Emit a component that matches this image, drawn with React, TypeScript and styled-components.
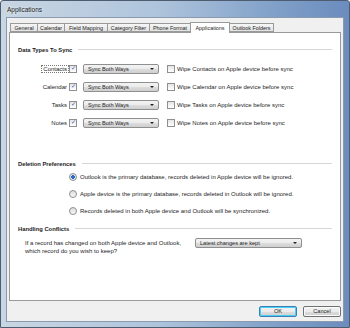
import styled, { createGlobalStyle } from "styled-components";

const GlobalStyle = createGlobalStyle`
  html, body {
    margin: 0;
    padding: 0;
    width: 350px;
    height: 328px;
    overflow: hidden;
  }
  body {
    font-family: "Liberation Sans", Arial, sans-serif;
    font-size: 6px;
    color: #1e1e1e;
  }
`;

const tabs = [
  { name: "General", width: 28 },
  { name: "Calendar", width: 28 },
  { name: "Field Mapping", width: 44 },
  { name: "Category Filter", width: 43 },
  { name: "Phone Format", width: 42 },
  { name: "Applications", width: 40 },
  { name: "Outlook Folders", width: 45 },
];

const syncRows = ["Contacts", "Calendar", "Tasks", "Notes"];

const deletionOptions = [
  "Outlook is the primary database, records deleted in Apple device will be ignored.",
  "Apple device is the primary database, records deleted in Outlook will be ignored.",
  "Records deleted in both Apple device and Outlook will be synchronized.",
];

function App() {
  return (
    <>
      <GlobalStyle />
      <Window>
        <TitleBar>Applications</TitleBar>
        <Client>
          <TabStrip>
            {tabs.map((t) => (
              <Tab key={t.name} $w={t.width} $active={t.name === "Applications"}>
                {t.name}
              </Tab>
            ))}
          </TabStrip>
          <Panel>
            <SectionHeader>
              <span>Data Types To Sync</span>
              <Rule />
            </SectionHeader>
            <SyncGrid>
              {syncRows.map((r) => (
                <SyncRow key={r}>
                  <LabelCell>
                    <RowLabel $focused={r === "Contacts"}>{r}</RowLabel>
                  </LabelCell>
                  <Check $checked />
                  <Select $width={76} $ml={6} $mr={8}>
                    <span>Sync Both Ways</span>
                    <Arrow />
                  </Select>
                  <Check />
                  <WipeText>Wipe {r} on Apple device before sync</WipeText>
                </SyncRow>
              ))}
            </SyncGrid>

            <SectionHeader $top={28}>
              <span>Deletion Preferences</span>
              <Rule />
            </SectionHeader>
            <RadioList>
              {deletionOptions.map((o, i) => (
                <RadioRow key={o}>
                  <Radio $checked={i === 0} />
                  <span>{o}</span>
                </RadioRow>
              ))}
            </RadioList>

            <SectionHeader $top={6}>
              <span>Handling Conflicts</span>
              <Rule />
            </SectionHeader>
            <ConflictRow>
              <ConflictText>
                If a record has changed on both Apple device and Outlook,
                <br />
                which record do you wish to keep?
              </ConflictText>
              <Select $width={107} $ml={0} $mr={0}>
                <span>Latest changes are kept</span>
                <Arrow />
              </Select>
            </ConflictRow>
          </Panel>
          <ButtonBar>
            <Button $focused>OK</Button>
            <Button>Cancel</Button>
          </ButtonBar>
        </Client>
      </Window>
    </>
  );
}

export default App;

const Window = styled.div`
  width: 350px;
  height: 328px;
  box-sizing: border-box;
  display: flex;
  flex-direction: column;
  padding: 0 5px 5px 5px;
  background: linear-gradient(90deg, #c9d6e3 0%, #aec4dc 45%, #7f9fc8 80%, #6b8cbd 100%);
  border: 1px solid #4d5d6f;
  border-radius: 3px 3px 0 0;
`;

const TitleBar = styled.div`
  height: 16px;
  display: flex;
  align-items: center;
  padding-left: 1px;
  font-size: 6.5px;
  color: #1a1a1a;
  text-shadow: 0 0 3px #ffffff;
`;

const Client = styled.div`
  flex: 1;
  display: flex;
  flex-direction: column;
  background: #f0f0f0;
  border: 1px solid #8a9bb0;
  padding: 4px 2px 0 2px;
`;

const TabStrip = styled.div`
  display: flex;
  align-items: flex-end;
  padding-left: 1px;
  height: 10px;
  position: relative;
  z-index: 1;
`;

const Tab = styled.div<{ $active?: boolean; $w: number }>`
  width: ${(p) => p.$w}px;
  box-sizing: border-box;
  height: ${(p) => (p.$active ? "11px" : "9px")};
  margin-bottom: ${(p) => (p.$active ? "-1px" : "0")};
  margin-left: -1px;
  display: flex;
  align-items: center;
  justify-content: center;
  white-space: nowrap;
  font-size: 5.4px;
  border: 1px solid #9a9a9a;
  border-bottom: ${(p) => (p.$active ? "none" : "1px solid #9a9a9a")};
  background: ${(p) =>
    p.$active ? "#ffffff" : "linear-gradient(#f6f6f6, #e3e3e3)"};
  position: relative;
  z-index: ${(p) => (p.$active ? 2 : 1)};
  &:first-child {
    margin-left: 0;
  }
`;

const Panel = styled.div`
  flex: 1;
  background: #ffffff;
  border: 1px solid #9a9a9a;
  padding: 0 8px 0 8px;
`;

const SectionHeader = styled.div<{ $top?: number }>`
  display: flex;
  align-items: center;
  gap: 6px;
  margin-top: ${(p) => p.$top ?? 13}px;
  height: 8px;
  font-weight: bold;
  font-size: 5.8px;
  color: #222;
`;

const Rule = styled.div`
  flex: 1;
  height: 1px;
  background: #d6d6d6;
  border-bottom: 1px solid #ffffff;
`;

const SyncGrid = styled.div`
  display: flex;
  flex-direction: column;
  margin-top: 6px;
`;

const SyncRow = styled.div`
  display: flex;
  align-items: center;
  height: 18px;
`;

const LabelCell = styled.div`
  width: 50px;
  display: flex;
  justify-content: flex-end;
  margin-right: 1px;
`;

const RowLabel = styled.span<{ $focused?: boolean }>`
  padding: 0 1px;
  outline: ${(p) => (p.$focused ? "1px dotted #777" : "none")};
`;

const Check = styled.span<{ $checked?: boolean }>`
  width: 6px;
  height: 6px;
  border: 1px solid #8f8f8f;
  background: linear-gradient(#e4e4e4, #ffffff);
  position: relative;
  flex-shrink: 0;
  &::after {
    content: "${(p) => (p.$checked ? "✓" : "")}";
    position: absolute;
    left: 0.5px;
    top: -2px;
    font-size: 6px;
    color: #3a55b4;
  }
`;

const Select = styled.div<{ $width: number; $ml: number; $mr: number }>`
  width: ${(p) => p.$width}px;
  height: 10px;
  box-sizing: border-box;
  margin: 0 ${(p) => p.$mr}px 0 ${(p) => p.$ml}px;
  padding: 0 4px;
  display: flex;
  align-items: center;
  justify-content: space-between;
  flex-shrink: 0;
  border: 1px solid #8e8f8f;
  border-radius: 2px;
  background: linear-gradient(#f3f3f3 0%, #ebebeb 50%, #dddddd 51%, #cfcfcf 100%);
  font-size: 5.6px;
`;

const Arrow = styled.span`
  width: 0;
  height: 0;
  border-left: 2px solid transparent;
  border-right: 2px solid transparent;
  border-top: 2px solid #222;
`;

const WipeText = styled.span`
  margin-left: 2px;
`;

const RadioList = styled.div`
  display: flex;
  flex-direction: column;
  margin-top: 0;
  padding-left: 51px;
`;

const RadioRow = styled.div`
  display: flex;
  align-items: center;
  gap: 3px;
  height: 17px;
`;

const Radio = styled.span<{ $checked?: boolean }>`
  width: 6px;
  height: 6px;
  border-radius: 50%;
  border: 1px solid #8f8f8f;
  background: ${(p) =>
    p.$checked
      ? "radial-gradient(circle, #2a6ac8 0 1.6px, #dde4ee 2px)"
      : "linear-gradient(#dcdcdc, #f8f8f8)"};
  flex-shrink: 0;
`;

const ConflictRow = styled.div`
  display: flex;
  align-items: flex-start;
  margin-top: 5px;
  padding-left: 7px;
`;

const ConflictText = styled.div`
  width: 170px;
  white-space: nowrap;
  line-height: 8px;
  margin-top: 1px;
`;

const ButtonBar = styled.div`
  height: 20px;
  display: flex;
  align-items: center;
  justify-content: flex-end;
  gap: 6px;
`;

const Button = styled.div<{ $focused?: boolean }>`
  width: 38px;
  height: 11px;
  box-sizing: border-box;
  display: flex;
  align-items: center;
  justify-content: center;
  border: 1px solid ${(p) => (p.$focused ? "#3c7fb1" : "#707070")};
  border-radius: 2px;
  background: linear-gradient(#f2f2f2 0%, #ebebeb 50%, #dddddd 51%, #cfcfcf 100%);
  box-shadow: ${(p) => (p.$focused ? "inset 0 0 0 1px #48d0f8" : "inset 0 0 0 1px #fcfcfc")};
  font-size: 5.6px;
`;
